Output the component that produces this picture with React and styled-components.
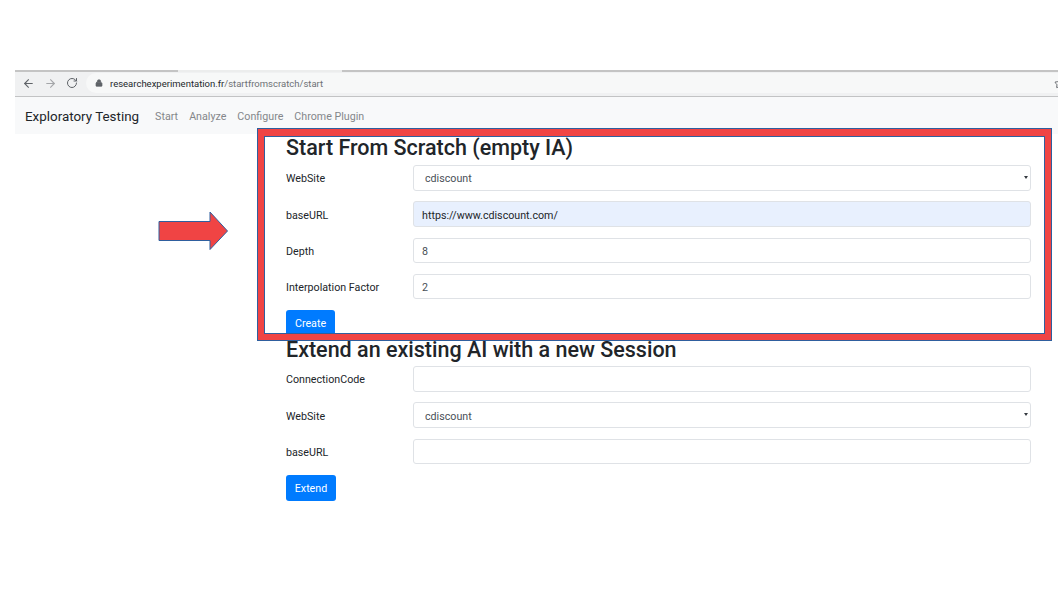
import styled, { createGlobalStyle } from "styled-components";
import { ArrowLeft, ArrowRight, RotateCw, Lock, Star } from "lucide-react";

const GlobalStyle = createGlobalStyle`
  html, body { margin: 0; padding: 0; background: #fff; }
  body { font-family: Roboto, "Liberation Sans", sans-serif; color: #212529; overflow: hidden; }
`;

const Page = styled.div`
  position: relative;
  width: 1058px;
  height: 595px;
  padding: 70px 0 0 15px;
  box-sizing: border-box;
  overflow: hidden;
`;

const TabEdge = styled.div`
  height: 2px;
  background: linear-gradient(to right, #c4c4c4 163px, #eceded 163px, #eceded 327px, #c4c4c4 327px);
`;

const Toolbar = styled.div`
  height: 22px;
  background: #f0f1f2;
  border-bottom: 1px solid #c2c3c4;
  display: flex;
  align-items: center;
  padding: 0 0 2px 7px;
  overflow: hidden;
`;

const NavIcon = styled.span`
  display: flex;
  width: 13px;
  margin-right: 9px;
  color: ${(p) => (p.$off ? "#a4a6a9" : "#5f6368")};
`;

const AddressBar = styled.div`
  flex: 1;
  height: 20px;
  margin-left: -2px;
  padding-left: 9px;
  display: flex;
  align-items: center;
  gap: 7px;
  background: #f7f8f8;
  border-radius: 10px 0 0 10px;
  font-size: 9.5px;
  color: #6d7175;
  white-space: nowrap;
`;

const Host = styled.span`
  color: #24282c;
`;

const Url = styled.span`
  flex: 1;
`;

const Pin = styled.span`
  display: flex;
  margin-right: -7px;
  color: #5f6368;
`;

const Navbar = styled.nav`
  height: 37px;
  padding: 1px 0 0 10px;
  box-sizing: border-box;
  background: #f8f9fa;
  display: flex;
  align-items: center;
`;

const Brand = styled.span`
  font-size: 13.4px;
  color: #212529;
  margin-right: 16px;
`;

const NavLink = styled.a`
  font-size: 10.7px;
  color: #84878a;
  margin-right: 11px;
`;

const Content = styled.main`
  padding: 0 27px 0 271px;
`;

const Title = styled.h2`
  margin: 0;
  height: ${(p) => p.$h}px;
  line-height: 27px;
  font-size: 21.5px;
  font-weight: 500;
  color: #212529;
`;

const Row = styled.div`
  display: grid;
  grid-template-columns: 127px 1fr;
  align-items: center;
  margin-bottom: 10.8px;
`;

const Label = styled.label`
  padding-top: 2px;
  font-size: 10.7px;
  color: #212529;
`;

const Input = styled.input`
  box-sizing: border-box;
  width: 100%;
  height: 25.5px;
  padding: 2px 8px 0;
  font: 10.7px Roboto, sans-serif;
  color: ${(p) => (p.$filled ? "#212529" : "#495057")};
  background: ${(p) => (p.$filled ? "#e8f0fe" : "#fff")};
  border: 1px solid #dfe2e6;
  border-radius: 3px;
  outline: none;
`;

const SelectWrap = styled.div`
  position: relative;
  &::after {
    content: "";
    position: absolute;
    right: 3px;
    top: 11px;
    border-left: 2px solid transparent;
    border-right: 2px solid transparent;
    border-top: 3px solid #343a40;
  }
`;

const Select = styled.select`
  box-sizing: border-box;
  width: 100%;
  height: 25.5px;
  padding: 2px 11px 0;
  font: 10.7px Roboto, sans-serif;
  color: #495057;
  background: #fff;
  border: 1px solid #dfe2e6;
  border-radius: 3px;
  appearance: none;
  outline: none;
`;

const Button = styled.button`
  display: block;
  width: ${(p) => p.$w}px;
  height: 26px;
  padding: 1px 0 0;
  font: 10.7px Roboto, sans-serif;
  color: #fff;
  background: #007bff;
  border: 0;
  border-radius: 3px;
`;

const RedFrame = styled.div`
  position: absolute;
  left: 257px;
  top: 128px;
  width: 795px;
  height: 213px;
  box-sizing: border-box;
  border: 1px solid #2f5f9e;
  pointer-events: none;
  &::before {
    content: "";
    position: absolute;
    inset: 0;
    border: 6px solid #f04444;
    border-top-width: 7px;
  }
  &::after {
    content: "";
    position: absolute;
    inset: 7px 6px 6px;
    border: 1px solid #2f5f9e;
  }
`;

const Arrow = styled.svg`
  position: absolute;
  left: 158px;
  top: 211px;
`;

const SiteSelect = () => (
  <SelectWrap>
    <Select defaultValue="cdiscount">
      <option>cdiscount</option>
    </Select>
  </SelectWrap>
);

export default function App() {
  return (
    <Page>
      <GlobalStyle />
      <TabEdge />
      <Toolbar>
        <NavIcon><ArrowLeft size={13} /></NavIcon>
        <NavIcon $off><ArrowRight size={13} /></NavIcon>
        <NavIcon><RotateCw size={12} /></NavIcon>
        <AddressBar>
          <Lock size={8} fill="#5f6368" color="#5f6368" />
          <Url><Host>researchexperimentation.fr</Host>/startfromscratch/start</Url>
          <Pin><Star size={11} /></Pin>
        </AddressBar>
      </Toolbar>
      <Navbar>
        <Brand>Exploratory Testing</Brand>
        <NavLink>Start</NavLink>
        <NavLink>Analyze</NavLink>
        <NavLink>Configure</NavLink>
        <NavLink>Chrome Plugin</NavLink>
      </Navbar>
      <Content>
        <section>
          <Title $h={31}>Start From Scratch (empty IA)</Title>
          <Row><Label>WebSite</Label><SiteSelect /></Row>
          <Row><Label>baseURL</Label><Input $filled defaultValue="https://www.cdiscount.com/" /></Row>
          <Row><Label>Depth</Label><Input defaultValue="8" /></Row>
          <Row><Label>Interpolation Factor</Label><Input defaultValue="2" /></Row>
          <Button $w={49}>Create</Button>
        </section>
        <section>
          <Title $h={30}>Extend an existing AI with a new Session</Title>
          <Row><Label>ConnectionCode</Label><Input /></Row>
          <Row><Label>WebSite</Label><SiteSelect /></Row>
          <Row><Label>baseURL</Label><Input /></Row>
          <Button $w={50}>Extend</Button>
        </section>
      </Content>
      <RedFrame />
      <Arrow width="71" height="40" viewBox="0 0 71 40">
        <path d="M1 10.5H52V1L69.5 20L52 38.5V29.5H1Z" fill="#f04444" stroke="#2f5f9e" strokeWidth="1" />
      </Arrow>
    </Page>
  );
}
